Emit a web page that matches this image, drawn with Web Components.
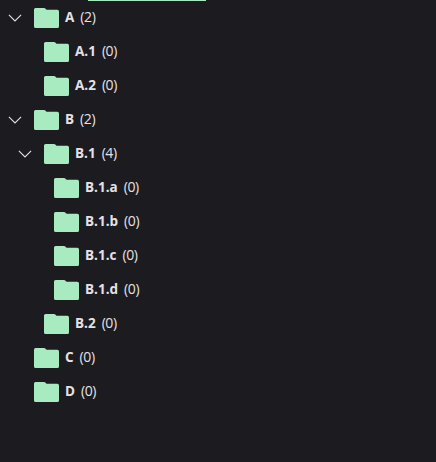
<!DOCTYPE html>
<html lang="en">
<head>
<meta charset="utf-8">
<title>Folder tree</title>
<style>
html, body { margin: 0; height: 100%; background: #1c1b20; overflow: hidden; }
</style>
</head>
<body>
<folder-tree>
  <tree-folder name="A" count="2" open>
    <tree-folder name="A.1" count="0"></tree-folder>
    <tree-folder name="A.2" count="0"></tree-folder>
  </tree-folder>
  <tree-folder name="B" count="2" open>
    <tree-folder name="B.1" count="4" open>
      <tree-folder name="B.1.a" count="0"></tree-folder>
      <tree-folder name="B.1.b" count="0"></tree-folder>
      <tree-folder name="B.1.c" count="0"></tree-folder>
      <tree-folder name="B.1.d" count="0"></tree-folder>
    </tree-folder>
    <tree-folder name="B.2" count="0"></tree-folder>
  </tree-folder>
  <tree-folder name="C" count="0"></tree-folder>
  <tree-folder name="D" count="0"></tree-folder>
</folder-tree>
<script>
customElements.define('folder-tree', class extends HTMLElement {
  constructor() {
    super();
    this.attachShadow({ mode: 'open' }).innerHTML = `
      <style>
        :host { display: flex; flex-direction: column; color: #e6e1e5;
          font: 14px/20px "Open Sans", "Noto Sans", sans-serif; }
        .bar { height: 1px; width: 118px; margin-left: 88px; background: #a8ebc0; }
      </style>
      <div class="bar"></div>
      <slot></slot>`;
  }
});

customElements.define('folder-icon', class extends HTMLElement {
  constructor() {
    super();
    this.attachShadow({ mode: 'open' }).innerHTML = `
      <style>:host, svg { display: block; width: 25px; height: 20px; }</style>
      <svg viewBox="0 0 25 20" fill="#a8ebc0"><path d="M1.6 0H10Q10.8 0 11.3.6L12.5 1.8H23.4Q25 1.8 25 3.6V18.4Q25 20 23.4 20H1.6Q0 20 0 18.4V1.6Q0 0 1.6 0Z"/></svg>`;
  }
});

customElements.define('tree-chevron', class extends HTMLElement {
  constructor() {
    super();
    this.attachShadow({ mode: 'open' }).innerHTML = `
      <style>:host, svg { display: block; width: 14px; height: 8px; }</style>
      <svg viewBox="0 0 14 8" fill="none" stroke="#e6e1e5" stroke-width="1.1"><path d="M.9 .9L7 7L13.1 .9"/></svg>`;
  }
});

customElements.define('tree-folder', class extends HTMLElement {
  connectedCallback() {
    if (this.shadowRoot) return;
    const open = this.hasAttribute('open');
    this.attachShadow({ mode: 'open' }).innerHTML = `
      <style>
        :host { display: block; }
        .row { display: flex; align-items: center; height: 34px; padding-left: 8px; }
        .toggle { width: 26px; flex: none; }
        .label { display: flex; gap: 6px; margin-left: 6px; padding-bottom: 3px; white-space: nowrap; }
        b { font-weight: 700; font-size: 13.5px; }
        span { letter-spacing: -.4px; }
        .children { padding-left: 10px; }
      </style>
      <div class="row">
        <div class="toggle">${open ? '<tree-chevron></tree-chevron>' : ''}</div>
        <folder-icon></folder-icon>
        <div class="label"><b>${this.getAttribute('name')}</b><span>(${this.getAttribute('count')})</span></div>
      </div>
      <div class="children"><slot></slot></div>`;
  }
});
</script>
</body>
</html>
